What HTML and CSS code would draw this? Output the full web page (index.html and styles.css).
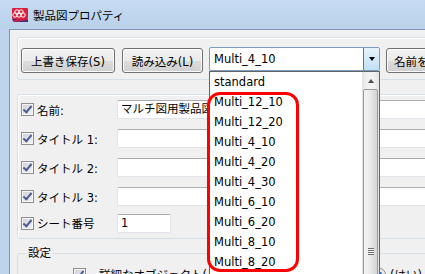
FILE: index.html
```html
<!DOCTYPE html>
<html>
<head>
	<meta charset="utf-8"/>
	<title>製品図プロパティ</title>
	<link rel="stylesheet" href="styles.css">
</head>
<body>
	<div class="window">
		<div class="titlebar">
			<svg class="app-icon" width="16" height="16" viewBox="0 0 16 16">
				<rect x="0" y="1" width="16" height="11" rx="1" fill="#d9213d"/>
				<path d="M0 12 H16 V15 H2 Z" fill="#3b2f7d"/>
				<path d="M0 14 L5 12 H16 V13 L3 15 Z" fill="#c81d4a"/>
				<g fill="none" stroke="#fff" stroke-width="1">
					<circle cx="5" cy="5" r="2.2"/>
					<circle cx="9" cy="5" r="2.2"/>
					<circle cx="7" cy="8" r="2.2"/>
					<circle cx="11" cy="8" r="2.2"/>
					<circle cx="3" cy="8" r="2.2"/>
				</g>
			</svg>
			<span class="title">製品図プロパティ</span>
		</div>
		<div class="client">
			<div class="group toolbar">
				<button class="btn btn-save">上書き保存(S)</button>
				<button class="btn btn-load">読み込み(L)</button>
				<div class="combo">
					<span class="combo-text">Multi_4_10</span>
					<span class="combo-arrow"></span>
				</div>
				<button class="btn btn-saveas">名前を付けて保存(A)</button>
			</div>
			<div class="group fields">
				<div class="row">
					<span class="check"></span>
					<span class="label">名前:</span>
					<span class="field">マルチ図用製品図</span>
				</div>
				<div class="row">
					<span class="check"></span>
					<span class="label">タイトル 1:</span>
					<span class="field"></span>
				</div>
				<div class="row">
					<span class="check"></span>
					<span class="label">タイトル 2:</span>
					<span class="field"></span>
				</div>
				<div class="row">
					<span class="check"></span>
					<span class="label">タイトル 3:</span>
					<span class="field"></span>
				</div>
				<div class="row row-sheet">
					<span class="check"></span>
					<span class="label">シート番号</span>
					<span class="field field-short">1</span>
				</div>
			</div>
			<fieldset class="settings">
				<legend>設定</legend>
				<div class="option">
					<span class="check"></span>
					<span class="option-text">詳細なオブジェクト(ビューの表示)</span>
					<span class="radio"></span>
					<span class="radio-text">(はい)</span>
				</div>
			</fieldset>
		</div>

		<div class="droplist">
			<ul class="items">
				<li>standard</li>
				<li>Multi_12_10</li>
				<li>Multi_12_20</li>
				<li>Multi_4_10</li>
				<li>Multi_4_20</li>
				<li>Multi_4_30</li>
				<li>Multi_6_10</li>
				<li>Multi_6_20</li>
				<li>Multi_8_10</li>
				<li>Multi_8_20</li>
			</ul>
			<div class="scrollbar">
				<div class="sb-up"></div>
				<div class="sb-thumb"><span class="grip"></span></div>
			</div>
		</div>
		<div class="callout"></div>
	</div>
</body>
</html>
```
FILE: styles.css
```css
body {
	margin: 0;
	overflow: hidden;
	background-color: #bcd4ee;
	font-family: "DejaVu Sans", "Noto Sans CJK JP", sans-serif;
	font-size: 11.5px;
	color: #000;
}
.window {
	position: relative;
	width: 640px;
	height: 274px;
}
.titlebar {
	height: 29px;
	display: flex;
	align-items: center;
	padding-left: 12px;
	background: linear-gradient(#c6dbf2, #b9d1ea);
}
.title {
	margin-left: 5px;
	font-family: "Noto Sans CJK JP", sans-serif;
	font-size: 11.5px;
}
.client {
	margin-left: 9px;
	height: 250px;
	padding: 7px 0 0 7px;
	background-color: #f0f0f0;
	border-left: 1px solid #8196b1;
	border-top: 1px solid #8196b1;
}
.group {
	border: 1px solid #d5dfe5;
	border-radius: 3px;
	box-shadow: inset 1px 1px 0 #fff;
}
.toolbar {
	display: flex;
	align-items: flex-start;
	gap: 6px;
	padding: 10px 3px 6px;
}
.btn {
	height: 25px;
	padding: 0 7px;
	font: inherit;
	color: #000;
	white-space: nowrap;
	border: 1px solid #707070;
	border-radius: 3px;
	background: linear-gradient(#f2f2f2 0%, #ebebeb 50%, #dddddd 51%, #cfcfcf 100%);
	box-shadow: inset 0 0 0 1px #fcfcfc;
}
.btn-save {
	width: 94px;
}
.btn-load {
	width: 81px;
	margin-left: 1px;
}
.combo {
	display: flex;
	width: 171px;
	height: 24px;
	margin-top: -1px;
	box-sizing: border-box;
	background-color: #fff;
	border: 1px solid #7a9cbf;
	border-radius: 2px;
}
.combo-text {
	flex: 1;
	padding-left: 4px;
	line-height: 22px;
	font-family: "DejaVu Sans", sans-serif;
}
.combo-arrow {
	width: 15px;
	display: flex;
	align-items: center;
	justify-content: center;
	background: linear-gradient(#e6f4fc, #bfe0f5);
	border-left: 1px solid #3c7fb1;
}
.combo-arrow::after {
	content: "";
	border-left: 3.5px solid transparent;
	border-right: 3.5px solid transparent;
	border-top: 4px solid #000;
}
.fields {
	margin-top: 14px;
	padding: 0 3px 3px;
}
.row {
	display: flex;
	align-items: center;
	height: 29px;
}
.row-sheet {
	height: 24px;
}
.check {
	position: relative;
	flex: none;
	width: 11px;
	height: 11px;
	margin-right: 3px;
	border: 1px solid #8e8f8f;
	background: linear-gradient(135deg, #cdd0d4, #f4f4f5);
	box-shadow: inset 0 0 0 1px #f6f6f6;
}
.check::after {
	content: "";
	position: absolute;
	left: 3px;
	top: 0px;
	width: 3px;
	height: 7px;
	border-right: 2px solid #4a5f8f;
	border-bottom: 2px solid #4a5f8f;
	transform: rotate(40deg);
}
.label {
	width: 80px;
	white-space: nowrap;
}
.field {
	width: 400px;
	height: 17px;
	padding-left: 3px;
	line-height: 17px;
	background-color: #fff;
	border: 1px solid #e2e3ea;
	border-top-color: #abadb3;
	border-radius: 2px;
	white-space: nowrap;
}
.field-short {
	width: 49px;
}
.settings {
	margin: 7px 0 0;
	padding: 0;
	height: 60px;
	border: 1px solid #d5dfe5;
	border-radius: 3px;
}
.settings legend {
	margin-left: 8px;
	padding: 0 2px;
	line-height: 14px;
}
.option {
	display: flex;
	align-items: center;
	padding: 6px 0 0 55px;
}
.option-text {
	margin-left: 10px;
	width: 272px;
	white-space: nowrap;
	overflow: hidden;
}
.radio {
	width: 11px;
	height: 11px;
	margin-left: 2px;
	border: 1px solid #8e8f8f;
	border-radius: 50%;
	background: radial-gradient(#3a6fb5 30%, #e8e8e8 40%);
}
.radio-text {
	margin-left: 4px;
}

/* open drop-down of the combo box */
.droplist {
	position: absolute;
	left: 209px;
	top: 71px;
	width: 171px;
	height: 210px;
	box-sizing: border-box;
	display: flex;
	background-color: #fff;
	border: 1px solid #646464;
}
.items {
	flex: 1;
	margin: 0;
	padding: 0;
	list-style: none;
}
.items li {
	height: 20px;
	line-height: 20px;
	padding-left: 4px;
	font-family: "DejaVu Sans", sans-serif;
}
.scrollbar {
	width: 17px;
	display: flex;
	flex-direction: column;
	background: linear-gradient(90deg, #e3e3e3, #f2f2f2 30%, #f2f2f2 70%, #e3e3e3);
}
.sb-up {
	height: 17px;
	display: flex;
	align-items: center;
	justify-content: center;
}
.sb-up::after {
	content: "";
	border-left: 3.5px solid transparent;
	border-right: 3.5px solid transparent;
	border-bottom: 4px solid #4d4d4d;
}
.sb-thumb {
	flex: 1;
	margin: 0 1px;
	padding-top: 158px;
	display: flex;
	justify-content: center;
	border: 1px solid #9a9a9a;
	border-radius: 2px;
	background: linear-gradient(90deg, #f4f4f4, #e8e8e8 50%, #d4d4d4);
}
.grip {
	width: 6px;
	height: 7px;
	background: repeating-linear-gradient(#6e6e6e 0 1px, #f4f4f4 1px 2px);
}

/* red annotation around the list */
.callout {
	position: absolute;
	left: 207px;
	top: 92px;
	width: 92px;
	height: 180px;
	box-sizing: border-box;
	border: 3px solid #f00;
	border-radius: 13px;
}
```
